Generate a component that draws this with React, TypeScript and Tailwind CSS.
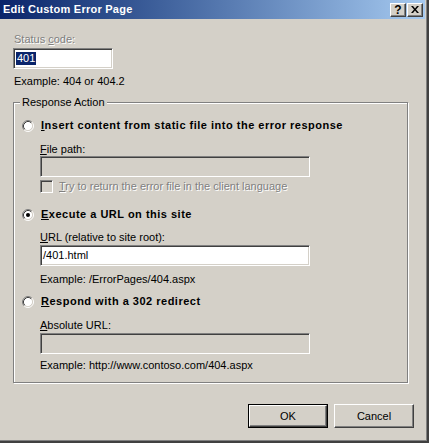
import React from 'react';

const FONT = "font-['Liberation_Sans',Arial,sans-serif]";

function Radio({ checked }: { checked?: boolean }) {
  return (
    <svg width="12" height="12" viewBox="0 0 12 12" className="shrink-0">
      <circle cx="6" cy="6" r="4.5" fill="#fff" />
      <path d="M2.11 9.89 A5.5 5.5 0 0 1 9.89 2.11" fill="none" stroke="#808080" strokeWidth="1" />
      <path d="M9.89 2.11 A5.5 5.5 0 0 1 2.11 9.89" fill="none" stroke="#fff" strokeWidth="1" />
      <path d="M2.82 9.18 A4.5 4.5 0 0 1 9.18 2.82" fill="none" stroke="#404040" strokeWidth="1" />
      <path d="M9.18 2.82 A4.5 4.5 0 0 1 2.82 9.18" fill="none" stroke="#d4d0c8" strokeWidth="1" />
      {checked && <circle cx="6" cy="6" r="2" fill="#000" />}
    </svg>
  );
}

function Field({ children, disabled, className = '' }: { children?: React.ReactNode; disabled?: boolean; className?: string }) {
  return (
    <div
      className={`flex h-[21px] items-center border border-t-[#808080] border-l-[#808080] border-r-white border-b-white pl-[2px] shadow-[inset_1px_1px_0_#404040,inset_-1px_-1px_0_#d4d0c8] ${
        disabled ? 'bg-[#d4d0c8]' : 'bg-white'
      } ${className}`}
    >
      {children}
    </div>
  );
}

function Button({ label, isDefault }: { label: string; isDefault?: boolean }) {
  return (
    <div className={`h-[24px] w-[80px] ${isDefault ? 'border border-black' : ''}`}>
      <div className="flex h-full w-full items-center justify-center border border-t-white border-l-white border-r-[#404040] border-b-[#404040] bg-[#d4d0c8] shadow-[inset_-1px_-1px_0_#808080]">
        {label}
      </div>
    </div>
  );
}

const dimText = 'text-[#808080] [text-shadow:1px_1px_0_#fff]';
const boldLabel = 'font-bold tracking-[0.5px]';

export default function App() {
  return (
    <div className={`h-[443px] w-[429px] border-b-2 border-r-2 border-[#404040] bg-[#d4d0c8] text-[11px] leading-[13px] text-black ${FONT}`}>
      <div className="flex h-full flex-col border-b border-r border-[#808080] pr-px">
        {/* Title bar */}
        <div className="flex h-[19px] items-center bg-gradient-to-r from-[#0a246a] to-[#a6caf0] pl-[3px] pr-[2px]">
          <span className="flex-1 text-[11px] font-bold tracking-[0.25px] text-white">Edit Custom Error Page</span>
          <div className="flex gap-[1px]">
            <div className="flex h-[14px] w-[16px] items-center justify-center border border-t-white border-l-white border-r-[#404040] border-b-[#404040] bg-[#d4d0c8] text-[12px] font-bold leading-none shadow-[inset_-1px_-1px_0_#808080]">
              ?
            </div>
            <div className="flex h-[14px] w-[16px] items-center justify-center border border-t-white border-l-white border-r-[#404040] border-b-[#404040] bg-[#d4d0c8] shadow-[inset_-1px_-1px_0_#808080]">
              <svg width="8" height="7" viewBox="0 0 8 7">
                <path d="M0 0h2l2 2.5L6 0h2L5 3.5 8 7H6L4 4.5 2 7H0l3-3.5z" fill="#000" />
              </svg>
            </div>
          </div>
        </div>

        {/* Status code */}
        <div className="pl-[14px] pt-[14px]">
          <div className={dimText}>
            Status <u>c</u>ode:
          </div>
          <Field className="mt-[2px] -ml-px w-[100px]">
            <span className="bg-[#0a246a] px-px text-white">401</span>
          </Field>
          <div className="mt-[6px]">Example: 404 or 404.2</div>
        </div>

        {/* Response Action group */}
        <div className="relative ml-[13px] mt-[14px] h-[281px] w-[395px] border border-[#808080] shadow-[inset_1px_1px_0_#fff,1px_1px_0_#fff]">
          <span className="absolute -top-[7px] left-[6px] bg-[#d4d0c8] px-[2px]">Response Action</span>

          <div className="flex items-center gap-[7px] pl-[8px] pt-[16px]">
            <Radio />
            <span className={boldLabel}>
              <u>I</u>nsert content from static file into the error response
            </span>
          </div>
          <div className="pl-[26px]">
            <div className="mt-[11px]">
              <u>F</u>ile path:
            </div>
            <Field disabled className="w-[270px]" />
            <div className="mt-[3px] flex items-center gap-[6px]">
              <div className="h-[13px] w-[13px] border border-t-[#808080] border-l-[#808080] border-r-white border-b-white bg-[#d4d0c8] shadow-[inset_1px_1px_0_#404040,inset_-1px_-1px_0_#d4d0c8]" />
              <span className={dimText}>
                <u>T</u>ry to return the error file in the client language
              </span>
            </div>
          </div>

          <div className="mt-[15px] flex items-center gap-[7px] pl-[8px]">
            <Radio checked />
            <span className={boldLabel}>
              <u>E</u>xecute a URL on this site
            </span>
          </div>
          <div className="pl-[26px]">
            <div className="mt-[10px]">
              <u>U</u>RL (relative to site root):
            </div>
            <Field className="mt-[1px] w-[270px]">/401.html</Field>
            <div className="mt-[7px]">Example: /ErrorPages/404.aspx</div>
          </div>

          <div className="mt-[9px] flex items-center gap-[7px] pl-[8px]">
            <Radio />
            <span className={boldLabel}>
              <u>R</u>espond with a 302 redirect
            </span>
          </div>
          <div className="pl-[26px]">
            <div className="mt-[11px]">
              <u>A</u>bsolute URL:
            </div>
            <Field disabled className="mt-[1px] w-[270px]" />
            <div className="mt-[5px]">Example: http://www.contoso.com/404.aspx</div>
          </div>
        </div>

        {/* Buttons */}
        <div className="mt-[21px] flex justify-end gap-[6px] pr-[11px]">
          <Button label="OK" isDefault />
          <Button label="Cancel" />
        </div>
      </div>
    </div>
  );
}
